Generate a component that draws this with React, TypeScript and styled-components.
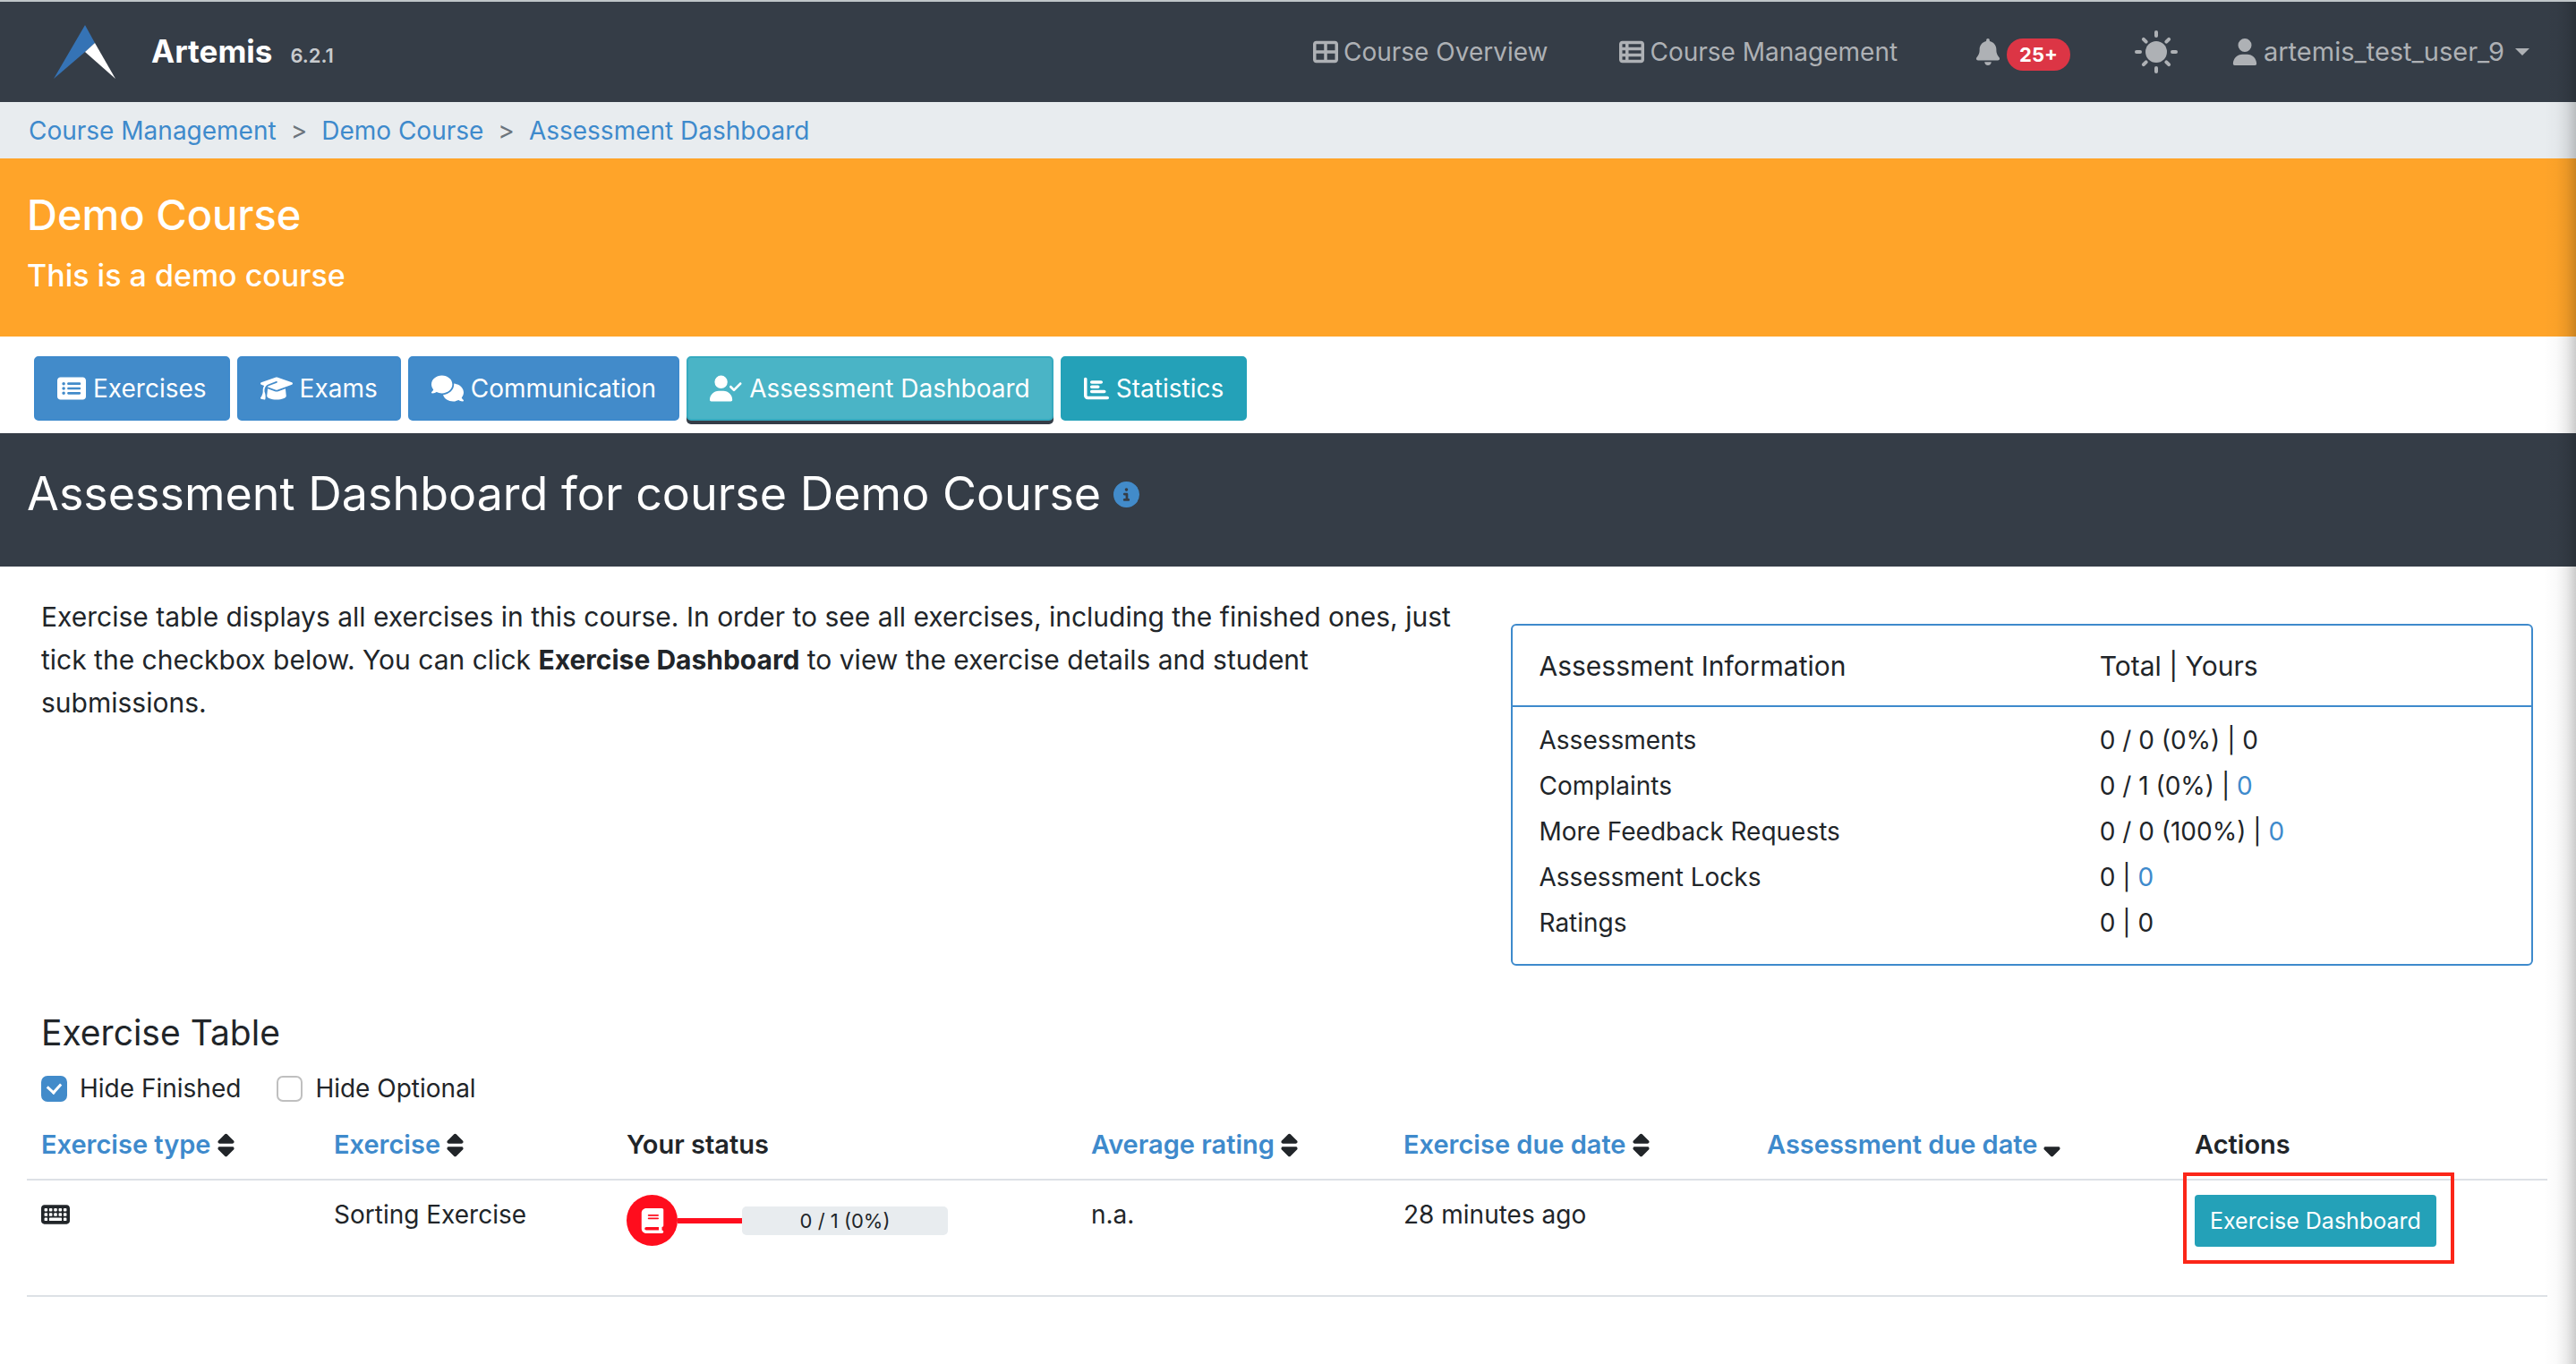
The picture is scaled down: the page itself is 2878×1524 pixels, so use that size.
import React from "react";
import styled, { createGlobalStyle } from "styled-components";
import {
  FaTableCellsLarge, FaTableList, FaBell, FaUser, FaRectangleList, FaGraduationCap, FaComments,
  FaUserCheck, FaChartBar, FaCircleInfo, FaKeyboard, FaBook, FaSort, FaSortDown,
} from "react-icons/fa6";

const blue = "#3e8acc";
const dark = "#353d47";

const GlobalStyle = createGlobalStyle`
  * { box-sizing: border-box; }
  body {
    margin: 0;
    background: #fff;
    color: #212529;
    font-family: Inter, "Liberation Sans", sans-serif;
    font-size: 28px;
    line-height: 48px;
  }
  h1, h2, h3, p { margin: 0; font-weight: 400; }
  a { color: ${blue}; text-decoration: none; }
  button { font: inherit; cursor: pointer; }
  svg { flex: none; }
`;

const Page = styled.div`
  position: relative;
  min-height: 100vh;
`;

const EdgeShade = styled.div`
  position: absolute;
  top: 2px;
  right: 0;
  bottom: 0;
  width: 36px;
  pointer-events: none;
  background: linear-gradient(to right, rgba(0,0,0,0), rgba(0,0,0,0.02) 40%, rgba(0,0,0,0.08) 70%, rgba(0,0,0,0.2));
`;

const Navbar = styled.header`
  display: flex;
  align-items: center;
  justify-content: space-between;
  height: 114px;
  padding: 0 52px 0 60px;
  background: ${dark};
  border-top: 2px solid #c0c6c9;
`;

const Brand = styled.a`
  display: flex;
  align-items: center;
  gap: 40px;
  color: #fff;
  font-size: 35px;
  font-weight: 700;
`;

const BrandText = styled.span`
  display: flex;
  align-items: baseline;
  gap: 20px;
  padding-top: 2px;
`;

const Version = styled.span`
  color: #c8cbce;
  font-size: 22px;
  font-weight: 600;
`;

const Nav = styled.nav`
  display: flex;
  align-items: center;
  gap: 80px;
`;

const NavLink = styled.a`
  display: flex;
  align-items: center;
  gap: 6px;
  color: #aeb1b5;
`;

const NavButton = styled.button`
  display: flex;
  align-items: center;
  gap: 6px;
  padding: 0;
  border: 0;
  background: none;
  color: #aeb1b5;
  font-size: 29px;
`;

const NavTools = styled.div`
  display: flex;
  align-items: center;
  gap: 60px;
  padding-left: 6px;
`;

const Badge = styled.span`
  margin: 6px 12px 0 0;
  padding: 0 14px;
  border-radius: 18px;
  background: #dc3545;
  color: #fff;
  font-size: 22px;
  font-weight: 700;
  line-height: 36px;
`;

const Caret = styled.span`
  margin-left: 6px;
  border: 8px solid transparent;
  border-top-color: currentColor;
  border-bottom: 0;
`;

const Breadcrumbs = styled.nav`
  display: flex;
  gap: 16px;
  padding: 8px 32px 7px;
  background: #e8ecef;
  color: #6c757d;
`;

const CourseHeader = styled.section`
  min-height: 199px;
  padding: 34px 30px;
  background: #ffa429;
  color: #fff;
`;

const CourseTitle = styled.h1`
  font-size: 47px;
  font-weight: 500;
  line-height: 58px;
`;

const CourseSubtitle = styled.p`
  margin-top: 18px;
  font-size: 34px;
  font-weight: 500;
  line-height: 42px;
`;

const Tabs = styled.div`
  display: flex;
  gap: 8px;
  padding: 22px 38px 14px;
`;

const Tab = styled.button<{ $tone: "blue" | "teal" | "active" }>`
  display: flex;
  align-items: center;
  gap: 8px;
  height: 72px;
  padding: 0 24px;
  border: 2px solid ${(p) => (p.$tone === "blue" ? blue : p.$tone === "teal" ? "#24a1b8" : "#35aabf")};
  border-radius: 5px;
  background: ${(p) => (p.$tone === "blue" ? "#428bca" : p.$tone === "teal" ? "#24a1b8" : "#4ab4c6")};
  color: #fff;
  box-shadow: ${(p) => (p.$tone === "active" ? `0 4px 0 ${dark}` : "none")};
`;

const TitleBar = styled.section`
  display: flex;
  align-items: flex-start;
  gap: 14px;
  min-height: 149px;
  padding: 34px 30px;
  background: ${dark};
  color: #fff;
`;

const PageTitle = styled.h2`
  font-size: 52px;
  line-height: 68px;
`;

const InfoButton = styled.button`
  display: flex;
  margin-top: 20px;
  padding: 0;
  border: 0;
  background: none;
  color: #428bca;
`;

const Overview = styled.section`
  display: grid;
  grid-template-columns: 7fr 5fr;
  gap: 42px;
  padding: 32px 48px 46px 46px;
`;

const Intro = styled.p`
  font-size: 30px;
`;

const Card = styled.div`
  margin-top: 32px;
  min-height: 382px;
  border: 2px solid ${blue};
  border-radius: 6px;
`;

const InfoTable = styled.table`
  width: 100%;
  border-collapse: collapse;
  table-layout: fixed;
  text-align: left;
  th, td { padding: 0 0 0 30px; font-weight: 400; }
  th:first-child { width: 55%; }
  thead th { height: 90px; font-size: 30px; border-bottom: 2px solid ${blue}; }
  tbody td { height: 51px; }
  tbody tr:first-child td { height: 63px; padding-top: 12px; }
`;

const Exercises = styled.section`
  padding: 0 32px 0 30px;
`;

const SectionTitle = styled.h3`
  padding: 0 16px;
  font-size: 39px;
  line-height: 58px;
`;

const Filters = styled.div`
  display: flex;
  gap: 40px;
  padding: 9px 16px;
`;

const Filter = styled.label`
  display: flex;
  align-items: center;
  gap: 14px;
`;

const CheckBox = styled.input`
  appearance: none;
  display: grid;
  place-items: center;
  width: 29px;
  height: 29px;
  margin: 0;
  border: 2px solid #bfbfbf;
  border-radius: 7px;
  background: #fff;
  &:checked { background: #428bca; border-color: #428bca; }
  &:checked::after {
    content: "";
    width: 8px;
    height: 11px;
    margin-bottom: 4px;
    border: solid #fff;
    border-width: 0 3px 3px 0;
    transform: rotate(42deg);
  }
`;

const ExerciseGrid = styled.table`
  width: 100%;
  border-collapse: collapse;
  table-layout: fixed;
  text-align: left;
  th, td { padding: 6px 16px; vertical-align: top; border-bottom: 2px solid #dde1e6; }
  th { height: 69px; font-size: 29px; font-weight: 600; white-space: nowrap; }
  td { height: 130px; padding-top: 16px; line-height: 44px; }
`;

const Column = styled.col<{ $width: number }>`
  width: ${(p) => p.$width}px;
`;

const SortButton = styled.button`
  display: flex;
  align-items: center;
  gap: 2px;
  padding: 0;
  border: 0;
  background: none;
  color: ${blue};
  line-height: 48px;
  svg { color: #212529; }
`;

const TypeIcon = styled.div`
  display: flex;
  align-items: center;
  height: 44px;
`;

const Status = styled.div`
  display: flex;
  align-items: center;
  height: 57px;
`;

const StatusDot = styled.span`
  display: grid;
  place-items: center;
  width: 57px;
  height: 57px;
  border-radius: 50%;
  background: #ff0d1d;
  color: #fff;
`;

const StatusLine = styled.span`
  width: 72px;
  height: 6px;
  background: #ff0d1d;
`;

const Progress = styled.span`
  width: 230px;
  border-radius: 5px;
  background: #e8ecef;
  font-size: 22px;
  line-height: 32px;
  text-align: center;
`;

const Highlight = styled.div`
  position: relative;
  display: inline-flex;
  &::after {
    content: "";
    position: absolute;
    inset: -25px -20px -19px -13px;
    border: 4px solid #fb2618;
    pointer-events: none;
  }
`;

const ActionButton = styled.button`
  height: 58px;
  padding: 0 17px;
  border: 0;
  border-radius: 4px;
  background: #24a1b8;
  color: #fff;
  font-size: 25px;
  white-space: nowrap;
`;

const Logo = () => (
  <svg width="69" height="60" viewBox="0 0 69 60" aria-hidden="true">
    <path d="M35 0 46 20 35 30 0 60Z" fill="#3573b5" />
    <path d="M46 20 69 60 35 30Z" fill="#fff" />
  </svg>
);

const Sun = () => (
  <svg width="48" height="48" viewBox="0 0 48 48" aria-hidden="true">
    <circle cx="24" cy="24" r="12" fill="currentColor" />
    <g stroke="currentColor" strokeWidth="4" strokeLinecap="round">
      {[0, 45, 90, 135, 180, 225, 270, 315].map((angle) => (
        <path key={angle} d={angle % 90 ? "M24 4v4" : "M24 2v4"} transform={`rotate(${angle} 24 24)`} />
      ))}
    </g>
  </svg>
);

const info: [string, string, string, boolean][] = [
  ["Assessments", "0 / 0 (0%) | ", "0", false],
  ["Complaints", "0 / 1 (0%) | ", "0", true],
  ["More Feedback Requests", "0 / 0 (100%) | ", "0", true],
  ["Assessment Locks", "0 | ", "0", true],
  ["Ratings", "0 | ", "0", false],
];

const columns: { label: string; width: number; sort?: "both" | "down" }[] = [
  { label: "Exercise type", width: 327, sort: "both" },
  { label: "Exercise", width: 327, sort: "both" },
  { label: "Your status", width: 519 },
  { label: "Average rating", width: 349, sort: "both" },
  { label: "Exercise due date", width: 406, sort: "both" },
  { label: "Assessment due date", width: 478, sort: "down" },
  { label: "Actions", width: 410 },
];

export default function App() {
  return (
    <Page>
      <GlobalStyle />
      <Navbar>
        <Brand href="#">
          <Logo />
          <BrandText>
            Artemis
            <Version>6.2.1</Version>
          </BrandText>
        </Brand>
        <Nav>
          <NavLink href="#"><FaTableCellsLarge size={28} />Course Overview</NavLink>
          <NavLink href="#"><FaTableList size={28} />Course Management</NavLink>
          <NavTools>
            <NavButton aria-label="Notifications"><FaBell size={30} /><Badge>25+</Badge></NavButton>
            <NavButton aria-label="Switch theme"><Sun /></NavButton>
            <NavButton><FaUser size={30} />artemis_test_user_9<Caret /></NavButton>
          </NavTools>
        </Nav>
      </Navbar>
      <Breadcrumbs aria-label="Breadcrumb">
        <a href="#">Course Management</a><span>&gt;</span>
        <a href="#">Demo Course</a><span>&gt;</span>
        <a href="#">Assessment Dashboard</a>
      </Breadcrumbs>
      <CourseHeader>
        <CourseTitle>Demo Course</CourseTitle>
        <CourseSubtitle>This is a demo course</CourseSubtitle>
      </CourseHeader>
      <Tabs>
        <Tab $tone="blue"><FaRectangleList size={32} />Exercises</Tab>
        <Tab $tone="blue"><FaGraduationCap size={36} />Exams</Tab>
        <Tab $tone="blue"><FaComments size={36} />Communication</Tab>
        <Tab $tone="active"><FaUserCheck size={36} />Assessment Dashboard</Tab>
        <Tab $tone="teal"><FaChartBar size={28} />Statistics</Tab>
      </Tabs>
      <TitleBar>
        <PageTitle>Assessment Dashboard for course Demo Course</PageTitle>
        <InfoButton aria-label="More information"><FaCircleInfo size={29} /></InfoButton>
      </TitleBar>
      <Overview>
        <Intro>
          Exercise table displays all exercises in this course. In order to see all exercises, including the finished
          ones, just tick the checkbox below. You can click <strong>Exercise Dashboard</strong> to view the exercise
          details and student submissions.
        </Intro>
        <Card>
          <InfoTable>
            <thead>
              <tr><th>Assessment Information</th><th>Total | Yours</th></tr>
            </thead>
            <tbody>
              {info.map(([label, total, yours, linked]) => (
                <tr key={label}>
                  <td>{label}</td>
                  <td>{total}{linked ? <a href="#">{yours}</a> : yours}</td>
                </tr>
              ))}
            </tbody>
          </InfoTable>
        </Card>
      </Overview>
      <Exercises>
        <SectionTitle>Exercise Table</SectionTitle>
        <Filters>
          <Filter><CheckBox type="checkbox" defaultChecked />Hide Finished</Filter>
          <Filter><CheckBox type="checkbox" />Hide Optional</Filter>
        </Filters>
        <ExerciseGrid>
          <colgroup>
            {columns.map((c) => <Column key={c.label} $width={c.width} />)}
          </colgroup>
          <thead>
            <tr>
              {columns.map((c) => (
                <th key={c.label}>
                  {c.sort ? (
                    <SortButton>{c.label}{c.sort === "both" ? <FaSort size={29} /> : <FaSortDown size={29} />}</SortButton>
                  ) : c.label}
                </th>
              ))}
            </tr>
          </thead>
          <tbody>
            <tr>
              <td><TypeIcon><FaKeyboard size={32} /></TypeIcon></td>
              <td>Sorting Exercise</td>
              <td>
                <Status>
                  <StatusDot><FaBook size={28} /></StatusDot>
                  <StatusLine />
                  <Progress>0 / 1 (0%)</Progress>
                </Status>
              </td>
              <td>n.a.</td>
              <td>28 minutes ago</td>
              <td />
              <td><Highlight><ActionButton>Exercise Dashboard</ActionButton></Highlight></td>
            </tr>
          </tbody>
        </ExerciseGrid>
      </Exercises>
      <EdgeShade />
    </Page>
  );
}
